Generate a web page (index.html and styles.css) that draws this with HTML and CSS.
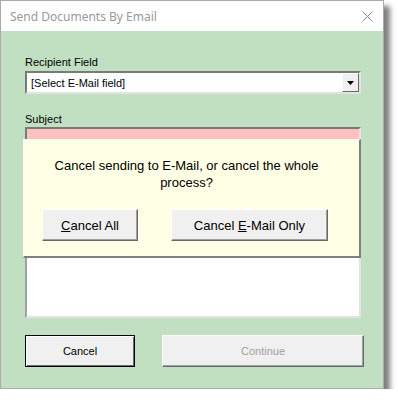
FILE: index.html
```html
<!DOCTYPE html>
<html lang="en">
<head>
    <meta charset="UTF-8">
    <title>Send Documents By Email</title>
    <link rel="stylesheet" href="styles.css">
</head>
<body>
    <div class="window">
        <div class="titlebar">
            <span class="title">Send Documents By Email</span>
            <svg class="close" width="11" height="11" viewBox="0 0 11 11">
                <path d="M0.5 0.5 L10.5 10.5 M10.5 0.5 L0.5 10.5" stroke="#8a8a8a" stroke-width="1" fill="none"/>
            </svg>
        </div>
        <div class="content">
            <label class="field-label">Recipient Field</label>
            <div class="combo">
                <span class="combo-text">[Select E-Mail field]</span>
                <span class="combo-btn">
                    <svg width="7" height="4" viewBox="0 0 7 4"><path d="M0 0 H7 L3.5 4 Z" fill="#000"/></svg>
                </span>
            </div>
            <label class="field-label subject-label">Subject</label>
            <div class="subject"></div>
            <div class="memo"></div>
            <div class="actions">
                <button class="btn btn-default">Cancel</button>
                <button class="btn btn-wide" disabled>Continue</button>
            </div>
        </div>

        <div class="prompt">
            <p class="prompt-text">Cancel sending to E-Mail, or cancel the whole process?</p>
            <div class="prompt-actions">
                <button class="btn prompt-btn"><u>C</u>ancel All</button>
                <button class="btn prompt-btn prompt-btn-wide">Cancel <u>E</u>-Mail Only</button>
            </div>
        </div>
    </div>
</body>
</html>
```

FILE: styles.css
```css
* {
    box-sizing: border-box;
    margin: 0;
    padding: 0;
}
body {
    background-color: #ffffff;
    font-family: 'Liberation Sans', Arial, sans-serif;
}
.window {
    position: relative;
    width: 384px;
    height: 389px;
    border: 1px solid #aaaaaa;
    background-color: #c1e0c1;
    box-shadow: 6px 6px 5px rgba(0,0,0,0.5);
}
.titlebar {
    height: 30px;
    background-color: #ffffff;
    display: flex;
    align-items: center;
    justify-content: space-between;
    padding: 0 10px 0 9px;
}
.title {
    font-family: 'Noto Sans', sans-serif;
    font-size: 12px;
    color: #999999;
}
.close {
    display: block;
}
.content {
    padding: 24px 22px 0 24px;
}
.field-label {
    display: block;
    font-size: 11px;
    line-height: 14px;
    color: #000000;
}
.combo {
    margin-top: 2px;
    height: 23px;
    width: 336px;
    display: flex;
    align-items: center;
    justify-content: space-between;
    background-color: #ffffff;
    border-style: solid;
    border-width: 2px;
    border-color: #7a7a7a #e3e3e3 #e3e3e3 #7a7a7a;
    padding: 0 0 0 4px;
}
.combo-text {
    font-size: 11px;
    color: #000000;
}
.combo-btn {
    width: 17px;
    height: 19px;
    display: flex;
    align-items: center;
    justify-content: center;
    background-color: #f0f0f0;
    border-style: solid;
    border-width: 1px;
    border-color: #ffffff #696969 #696969 #ffffff;
}
.subject-label {
    margin-top: 18px;
}
.subject {
    margin-top: 1px;
    height: 22px;
    width: 336px;
    background-color: #ffc0c0;
    border-style: solid;
    border-width: 2px;
    border-color: #7a7a7a #e3e3e3 #e3e3e3 #7a7a7a;
}
.memo {
    margin-top: 8px;
    height: 161px;
    width: 336px;
    background-color: #ffffff;
    border-style: solid;
    border-width: 2px;
    border-color: #a0a0a0 #e3e3e3 #e3e3e3 #a0a0a0;
}
.actions {
    display: flex;
    justify-content: space-between;
    margin-top: 17px;
    width: 339px;
}
.btn {
    font-family: 'Liberation Sans', Arial, sans-serif;
    font-size: 11px;
    color: #000000;
    background-color: #f0f0f0;
    height: 32px;
    border-style: solid;
    border-width: 1px;
    border-color: #ffffff #696969 #696969 #ffffff;
    box-shadow: inset -1px -1px 0 #a0a0a0;
}
.btn-default {
    width: 110px;
    border-color: #000000;
    box-shadow: inset 1px 1px 0 #ffffff, inset -1px -1px 0 #696969;
}
.btn-wide {
    width: 202px;
}
.btn:disabled {
    color: #a0a0a0;
}
.prompt {
    position: absolute;
    left: 22px;
    top: 138px;
    width: 338px;
    height: 119px;
    background-color: #ffffe6;
    border-style: solid;
    border-width: 1px 2px 2px 1px;
    border-color: #ffffff #808080 #808080 #ffffff;
    padding: 17px 18px 0 18px;
}
.prompt-text {
    font-size: 13px;
    line-height: 17px;
    text-align: center;
    color: #000000;
    padding: 0 10px 0 0;
}
.prompt-actions {
    display: flex;
    gap: 33px;
    margin-top: 18px;
}
.prompt-btn {
    font-size: 13px;
    width: 96px;
    height: 32px;
}
.prompt-btn-wide {
    width: 157px;
}
```
